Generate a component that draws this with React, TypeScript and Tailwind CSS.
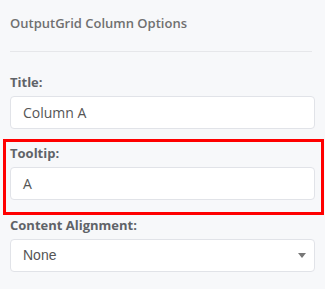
import React from 'react';

const font = { fontFamily: '"Open Sans", "Liberation Sans", sans-serif' };

const Field: React.FC<{ label: string; value: string; className?: string; children?: React.ReactNode }> = ({
  label,
  value,
  className = '',
  children,
}) => (
  <div className={`relative ${className}`}>
    {children}
    <div className="text-[13px] leading-[20px] font-bold text-[#5f6368]">{label}</div>
    <div className="mt-[4px] h-[33px] rounded-[4px] border border-[#e1e3e8] bg-white px-[12px] flex items-center text-[14px] text-[#555]">
      {value}
    </div>
  </div>
);

const App: React.FC = () => {
  return (
    <div className="w-[325px] h-[289px] bg-[#f7f8fa] overflow-hidden" style={font}>
      <div className="px-[10px] pt-[13px]">
        <div className="text-[13px] leading-[20px] font-semibold text-[#707070]">OutputGrid Column Options</div>
        <div className="mt-[18px] mr-[3px] border-t border-[#e6e7ea]"></div>

        <Field label="Title:" value="Column A" className="mt-[20px] mb-[14px]" />

        <Field label="Tooltip:" value="A" className="mb-[15px]">
          <div className="absolute -left-[7px] -right-[9px] -top-[4px] -bottom-[15px] border-[3px] border-[#ff0000] pointer-events-none"></div>
        </Field>

        <div>
          <div className="text-[13px] leading-[20px] font-bold text-[#5f6368]">Content Alignment:</div>
          <div className="mt-[4px] h-[33px] rounded-[4px] border border-[#e1e3e8] bg-white pl-[12px] pr-[8px] flex items-center justify-between">
            <span className="text-[14px] text-[#555]" style={{ fontFamily: '"Liberation Sans", Arial, sans-serif' }}>
              None
            </span>
            <svg width="8" height="5" viewBox="0 0 8 5">
              <path d="M0 0 L8 0 L4 5 Z" fill="#777" />
            </svg>
          </div>
        </div>
      </div>
    </div>
  );
};

export default App;
